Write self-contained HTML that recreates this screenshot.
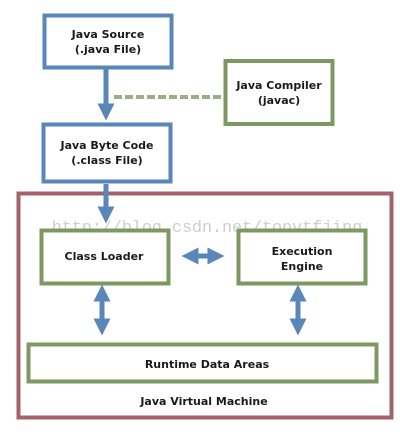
<!DOCTYPE html>
<html><head><style>
html,body{margin:0;padding:0;background:#fff;width:400px;height:433px;overflow:hidden}
svg text{font-family:"DejaVu Sans","Liberation Sans",sans-serif;font-weight:bold;font-size:11px;fill:#1a1a1a;text-anchor:middle}
</style></head><body>
<svg width="400" height="433" viewBox="0 0 400 433" xmlns="http://www.w3.org/2000/svg">
<defs>
<marker id="h" viewBox="0 0 10 10" refX="5" refY="5" markerWidth="3.4" markerHeight="3.4" orient="auto-start-reverse"><path d="M0,0 L10,5 L0,10 z" fill="#5a86ba"/></marker>
</defs>
<rect x="44.5" y="15.5" width="127" height="52" fill="#fff" stroke="#5a86ba" stroke-width="4"/>
<text x="108" y="38">Java Source</text>
<text x="108" y="53">(.java File)</text>
<rect x="225.5" y="61" width="107" height="63" fill="#fff" stroke="#7e9862" stroke-width="4"/>
<text x="279" y="89">Java Compiler</text>
<text x="279" y="104">(javac)</text>
<line x1="114" y1="97" x2="223" y2="97" stroke="#9cae84" stroke-width="4" stroke-dasharray="8,3"/>
<line x1="106" y1="69" x2="106" y2="112" stroke="#5a86ba" stroke-width="5" marker-end="url(#h)"/>
<rect x="43.5" y="124.5" width="127" height="57" fill="#fff" stroke="#5a86ba" stroke-width="4"/>
<text x="107" y="149">Java Byte Code</text>
<text x="107" y="164">(.class File)</text>
<rect x="18.5" y="193.5" width="373" height="224" fill="#fff" stroke="#a3636b" stroke-width="4"/>
<line x1="106" y1="184" x2="106" y2="215" stroke="#5a86ba" stroke-width="5" marker-end="url(#h)"/>
<text x="207" y="232" style="font-family:'Liberation Mono',monospace;font-weight:normal;font-size:16.7px;fill:#cdcdcd">http://blog.csdn.net/tonytfjing</text>
<rect x="41.5" y="230.5" width="127" height="53" fill="#fff" stroke="#7e9862" stroke-width="4"/>
<text x="104" y="260">Class Loader</text>
<rect x="238.5" y="230.5" width="127" height="53" fill="#fff" stroke="#7e9862" stroke-width="4"/>
<text x="302" y="255">Execution</text>
<text x="302" y="270">Engine</text>
<line x1="190" y1="256" x2="216" y2="256" stroke="#5a86ba" stroke-width="5" marker-start="url(#h)" marker-end="url(#h)"/>
<line x1="102" y1="293" x2="102" y2="327" stroke="#5a86ba" stroke-width="5" marker-start="url(#h)" marker-end="url(#h)"/>
<line x1="298" y1="293" x2="298" y2="327" stroke="#5a86ba" stroke-width="5" marker-start="url(#h)" marker-end="url(#h)"/>
<rect x="28.5" y="344.5" width="348" height="37" fill="#fff" stroke="#7e9862" stroke-width="4"/>
<text x="207" y="368">Runtime Data Areas</text>
<text x="204" y="405">Java Virtual Machine</text>
</svg>
</body></html>
